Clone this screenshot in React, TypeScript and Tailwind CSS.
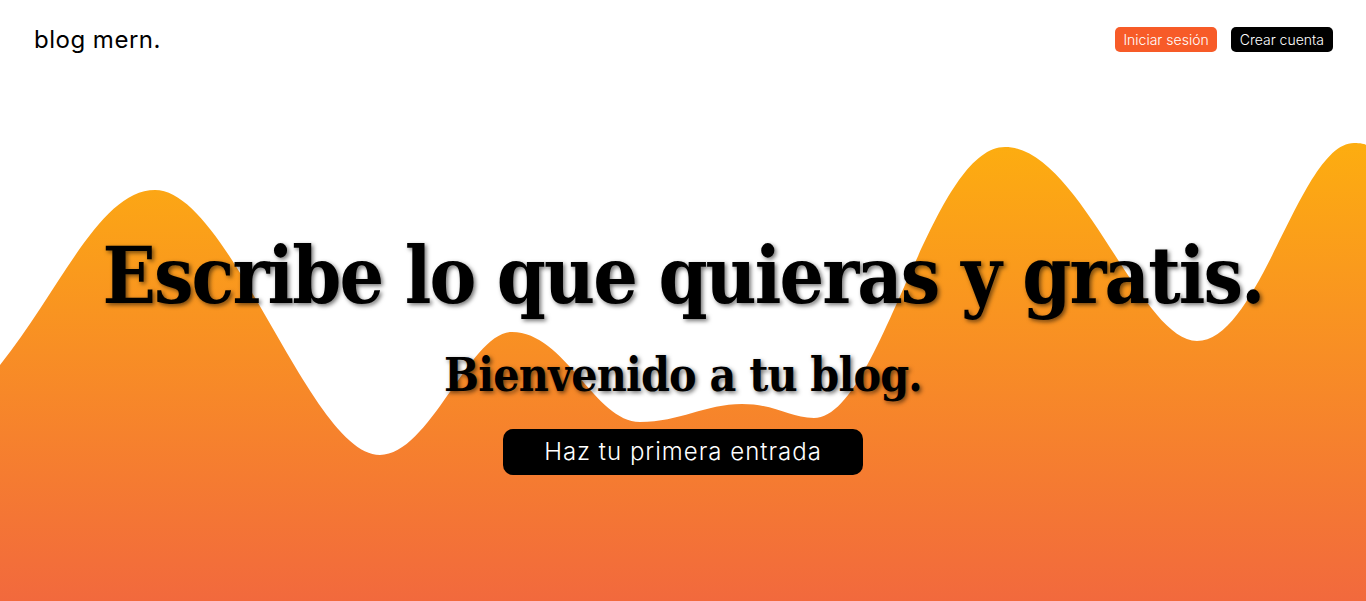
import React from "react";

const Wave = () => (
  <svg
    className="absolute inset-0 w-full h-full"
    viewBox="0 0 1366 601"
    preserveAspectRatio="none"
  >
    <defs>
      <linearGradient id="waveFill" x1="0" y1="0" x2="0" y2="1" gradientUnits="objectBoundingBox">
        <stop offset="0" stopColor="#fdad10" />
        <stop offset="1" stopColor="#f2693d" />
      </linearGradient>
    </defs>
    <path
      fill="url(#waveFill)"
      d="M0,365 C60,290 100,190 155,190 C230,190 310,455 380,455 C430,455 470,332 512,332 C565,332 595,422 640,422 C680,422 705,404 742,404 C775,404 790,418 814,418 C880,418 930,147 1005,147 C1080,147 1140,341 1197,341 C1260,341 1300,143 1354,143 C1360,143 1366,144 1366,145 L1366,601 L0,601 Z"
    />
  </svg>
);

const App = () => {
  return (
    <div className="relative h-[601px] w-full overflow-hidden bg-white font-['Inter',sans-serif]">
      <Wave />
      <div className="relative flex flex-col h-full">
        <nav className="flex items-center justify-between pl-[34px] pr-[33px] pt-[27px]">
          <span className="text-[24px] leading-none text-black tracking-[0.5px]">blog mern.</span>
          <div className="flex items-center gap-[14px]">
            <button className="h-[25px] px-[8px] rounded-[5px] bg-[#f75b28] text-white text-[14px] font-light">
              Iniciar sesión
            </button>
            <button className="h-[25px] px-[9px] rounded-[5px] bg-black text-white text-[14px] font-light">
              Crear cuenta
            </button>
          </div>
        </nav>

        <main className="flex flex-col items-center mt-[185px]">
          <h1 className="font-['DejaVu_Serif',serif] [font-stretch:condensed] font-bold text-[78px] leading-none tracking-[-1.9px] text-black [text-shadow:2px_2px_4px_rgba(0,0,0,0.55)]">
            Escribe lo que quieras y gratis.
          </h1>
          <h2 className="mt-[37px] font-['DejaVu_Serif',serif] [font-stretch:condensed] font-bold text-[46px] leading-none tracking-[-0.8px] text-black [text-shadow:2px_2px_4px_rgba(0,0,0,0.55)]">
            Bienvenido a tu blog.
          </h2>
          <button className="mt-[31px] w-[360px] h-[46px] rounded-[10px] bg-black text-white text-[24px] font-light tracking-[1px]">
            Haz tu primera entrada
          </button>
        </main>
      </div>
    </div>
  );
};

export default App;
